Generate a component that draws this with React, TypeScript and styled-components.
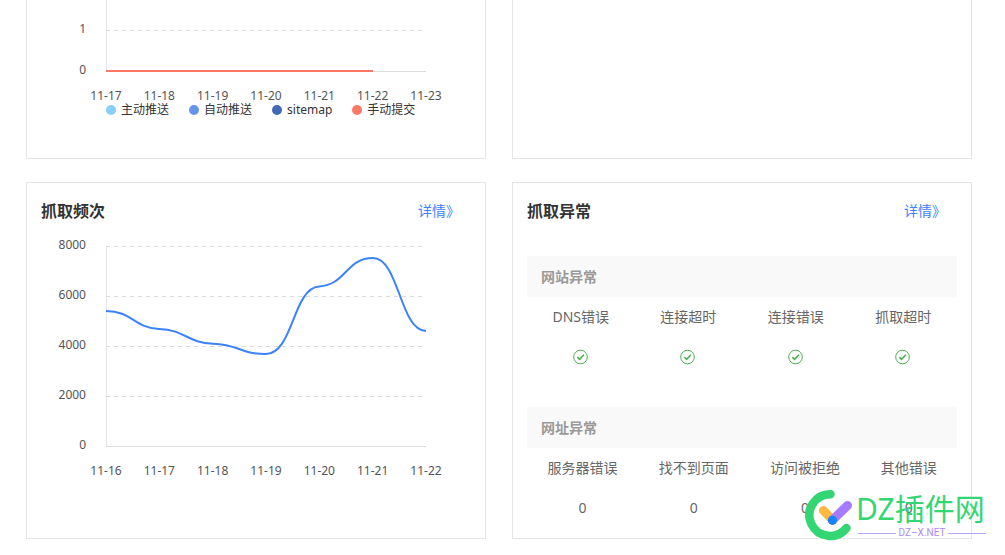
import React from 'react';
import styled, { createGlobalStyle } from 'styled-components';

const GlobalStyle = createGlobalStyle`
  * { box-sizing: border-box; }
  body {
    margin: 0;
    background: #fff;
    color: #666;
    font: 14px/20px "Noto Sans", "Noto Sans CJK SC", sans-serif;
  }
`;

const Page = styled.main`
  position: relative;
  padding: 0 33px 16px 26px;
`;

const Board = styled.div`
  display: grid;
  grid-template-columns: 1fr 1fr;
  gap: 23px 26px;
`;

const Card = styled.section<{ $continued?: boolean }>`
  min-width: 0;
  border: 1px solid #e5e5e5;
  border-top-width: ${(p) => (p.$continued ? 0 : 1)}px;
  padding: ${(p) => (p.$continued ? '0 14px 40px' : '18px 14px 10px')};
`;

const CardHeader = styled.header`
  display: flex;
  align-items: center;
  justify-content: space-between;
  height: 20px;
  padding-right: 11px;
`;

const CardTitle = styled.h2`
  margin: 0;
  font-size: 16px;
  line-height: 20px;
  font-weight: 700;
  color: #333;
`;

const DetailLink = styled.a`
  color: #3c82ff;
  text-decoration: none;
`;

const Plot = styled.svg`
  display: block;
  max-width: 100%;
  overflow: visible;
  font-size: 12px;
  fill: #555;
`;

const FrequencyPlot = styled(Plot)`
  margin-top: 15px;
`;

const Legend = styled.ul`
  display: flex;
  gap: 20px;
  margin: 0;
  padding: 0 0 0 65px;
  list-style: none;
  font-size: 12px;
  line-height: 16px;
  color: #333;
`;

const LegendItem = styled.li<{ $color: string }>`
  display: flex;
  align-items: center;
  gap: 5px;
  white-space: nowrap;

  &::before {
    content: '';
    width: 10px;
    height: 10px;
    border-radius: 50%;
    background: ${(p) => p.$color};
  }
`;

const ErrorGroups = styled.div`
  display: grid;
  gap: 30px;
  margin-top: 35px;
`;

const ErrorTable = styled.table<{ $even?: boolean }>`
  width: 100%;
  table-layout: ${(p) => (p.$even ? 'fixed' : 'auto')};
  border-collapse: collapse;
  text-align: center;

  caption {
    height: 41px;
    padding-left: 14px;
    background: #f9f9f9;
    color: #999;
    font-weight: 700;
    line-height: 41px;
    text-align: left;
  }

  th,
  td {
    height: 40px;
    padding: 0;
    font-weight: 400;
    white-space: nowrap;
  }

  th {
    padding: 0 ${(p) => (p.$even ? 0 : 18)}px;
  }
`;

const CheckIcon = styled.svg`
  display: block;
  margin: 0 auto;
  fill: none;
  stroke: #4caf50;
`;

const Watermark = styled.div`
  position: absolute;
  right: 18px;
  bottom: 14px;
  display: flex;
  pointer-events: none;
`;

const WatermarkText = styled.div`
  display: flex;
  flex-direction: column;
  width: 131px;
`;

const WatermarkName = styled.span`
  color: #34d673;
  font-size: 30px;
  line-height: 40px;
  font-weight: 400;
  white-space: nowrap;
`;

const WatermarkSite = styled.span`
  display: flex;
  align-items: center;
  gap: 3px;
  padding: 0 1px 0 2px;
  color: #a98bfa;
  font: 10px/8px Roboto, sans-serif;

  &::before,
  &::after {
    content: '';
    flex: 1;
    height: 1px;
    background: #b9a3f8;
  }
`;

const AXIS_LEFT = 65;
const AXIS_WIDTH = 320;
const STEP = AXIS_WIDTH / 6;

interface AxesProps {
  top: number;
  base: number;
  ticks: { value: string; y: number }[];
  days: string[];
}

function Axes({ top, base, ticks, days }: AxesProps) {
  return (
    <>
      <path d={`M${AXIS_LEFT + 0.5} ${top}V${base}`} stroke="#e5e5e5" />
      {ticks.map((t) => (
        <g key={t.value}>
          {t.y !== base && (
            <path
              d={`M${AXIS_LEFT} ${t.y + 0.5}h${AXIS_WIDTH}`}
              stroke="#dcdcdc"
              strokeDasharray="4 4"
            />
          )}
          <text x={45} y={t.y + 3} textAnchor="end">{t.value}</text>
        </g>
      ))}
      <path d={`M${AXIS_LEFT} ${base + 0.5}h${AXIS_WIDTH}`} stroke="#dcdcdc" />
      {days.map((d, i) => (
        <text key={d} x={AXIS_LEFT + STEP * i} y={base + 29} textAnchor="middle">{d}</text>
      ))}
    </>
  );
}

const submitTypes = [
  { name: '主动推送', color: '#87cefa' },
  { name: '自动推送', color: '#6495ed' },
  { name: 'sitemap', color: '#4169b4' },
  { name: '手动提交', color: '#ff7866' },
];

const siteErrors = ['DNS错误', '连接超时', '连接错误', '抓取超时'];
const urlErrors = ['服务器错误', '找不到页面', '访问被拒绝', '其他错误'];

const Check = () => (
  <CheckIcon width="16" height="16" viewBox="0 0 16 16" role="img" aria-label="正常">
    <circle cx="7.500" cy="8" r="6.800" strokeWidth="1" />
    <path d="M4.300 8.200 6.600 10.300l4.300-4.500" strokeWidth="1.600" />
  </CheckIcon>
);

export default function App() {
  return (
    <Page>
      <GlobalStyle />
      <Board>
        <Card $continued>
          <Plot width="430" height="102" viewBox="0 0 430 102">
            <Axes
              top={0}
              base={71}
              ticks={[{ value: '1', y: 30 }, { value: '0', y: 71 }]}
              days={['11-17', '11-18', '11-19', '11-20', '11-21', '11-22', '11-23']}
            />
            <path d="M65 71H332" stroke="#ff7866" strokeWidth="2" />
          </Plot>
          <Legend>
            {submitTypes.map((s) => (
              <LegendItem key={s.name} $color={s.color}>{s.name}</LegendItem>
            ))}
          </Legend>
        </Card>
        <Card $continued />

        <Card>
          <CardHeader>
            <CardTitle>抓取频次</CardTitle>
            <DetailLink href="#frequency">详情》</DetailLink>
          </CardHeader>
          <FrequencyPlot width="430" height="250" viewBox="0 0 430 250">
            <Axes
              top={10}
              base={210}
              ticks={[
                { value: '8000', y: 10 },
                { value: '6000', y: 60 },
                { value: '4000', y: 110 },
                { value: '2000', y: 160 },
                { value: '0', y: 210 },
              ]}
              days={['11-16', '11-17', '11-18', '11-19', '11-20', '11-21', '11-22']}
            />
            <path
              d="M65 75C91 75 93 92 118 93C145 94 146 107 172 107.700C199 108.500 198 118 225 118C252 118 252 52 278 50.500C305 49 305 22 332 22C358 22 359 95 385 95"
              fill="none"
              stroke="#3c82ff"
              strokeWidth="2"
            />
          </FrequencyPlot>
        </Card>

        <Card>
          <CardHeader>
            <CardTitle>抓取异常</CardTitle>
            <DetailLink href="#errors">详情》</DetailLink>
          </CardHeader>
          <ErrorGroups>
            <ErrorTable $even>
              <caption>网站异常</caption>
              <thead>
                <tr>{siteErrors.map((e) => <th key={e} scope="col">{e}</th>)}</tr>
              </thead>
              <tbody>
                <tr>{siteErrors.map((e) => <td key={e}><Check /></td>)}</tr>
              </tbody>
            </ErrorTable>
            <ErrorTable>
              <caption>网址异常</caption>
              <thead>
                <tr>{urlErrors.map((e) => <th key={e} scope="col">{e}</th>)}</tr>
              </thead>
              <tbody>
                <tr>{urlErrors.map((e) => <td key={e}>0</td>)}</tr>
              </tbody>
            </ErrorTable>
          </ErrorGroups>
        </Card>
      </Board>

      <Watermark>
        <svg width="51" height="52" viewBox="0 0 51 52" fill="none" strokeLinecap="round" aria-hidden="true">
          <path d="M25.500 5.300A20.800 20.800 0 1 0 41.500 39" stroke="#34d673" strokeWidth="8.500" />
          <path d="M18.500 21.500 27.500 31" stroke="#ffb83f" strokeWidth="9" />
          <path d="M42.500 16.500 27.500 31" stroke="#a57cff" strokeWidth="9" />
          <circle cx="27.500" cy="31.300" r="4.600" fill="#1684fc" />
        </svg>
        <WatermarkText>
          <WatermarkName>DZ插件网</WatermarkName>
          <WatermarkSite>DZ–X.NET</WatermarkSite>
        </WatermarkText>
      </Watermark>
    </Page>
  );
}
